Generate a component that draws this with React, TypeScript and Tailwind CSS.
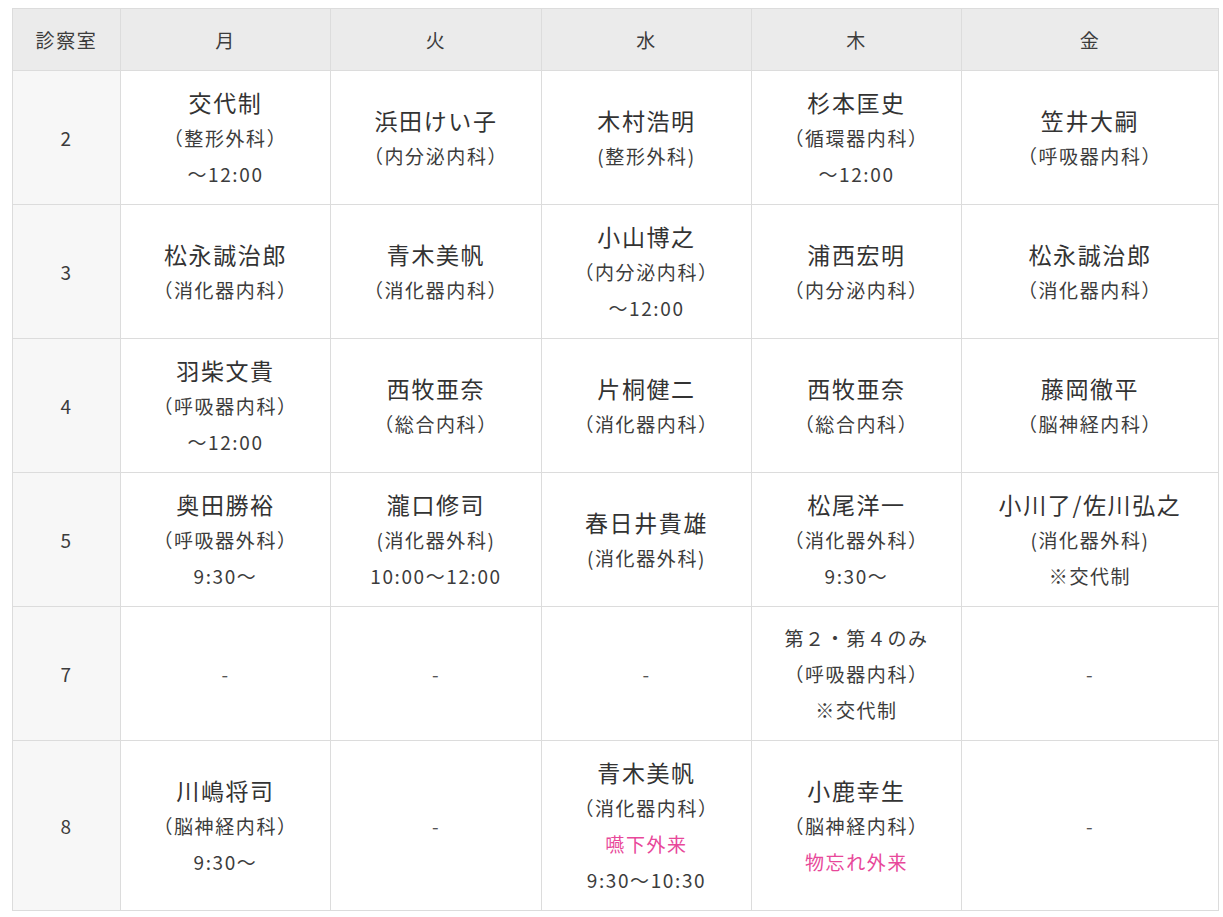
type Line = { t: string; k?: 'name' | 'sub' | 'pink' }
type Cell = Line[] | null

const days = ['月', '火', '水', '木', '金']
const widths = ['w-[210px]', 'w-[211px]', 'w-[210px]', 'w-[210px]', 'w-[257px]']

const n = (t: string): Line => ({ t, k: 'name' })
const s = (t: string): Line => ({ t, k: 'sub' })
const p = (t: string): Line => ({ t, k: 'pink' })

const rows: { room: string; cells: Cell[] }[] = [
  {
    room: '2',
    cells: [
      [n('交代制'), s('（整形外科）'), s('〜12:00')],
      [n('浜田けい子'), s('（内分泌内科）')],
      [n('木村浩明'), s('(整形外科)')],
      [n('杉本匡史'), s('（循環器内科）'), s('〜12:00')],
      [n('笠井大嗣'), s('（呼吸器内科）')],
    ],
  },
  {
    room: '3',
    cells: [
      [n('松永誠治郎'), s('（消化器内科）')],
      [n('青木美帆'), s('（消化器内科）')],
      [n('小山博之'), s('（内分泌内科）'), s('〜12:00')],
      [n('浦西宏明'), s('（内分泌内科）')],
      [n('松永誠治郎'), s('（消化器内科）')],
    ],
  },
  {
    room: '4',
    cells: [
      [n('羽柴文貴'), s('（呼吸器内科）'), s('〜12:00')],
      [n('西牧亜奈'), s('（総合内科）')],
      [n('片桐健二'), s('（消化器内科）')],
      [n('西牧亜奈'), s('（総合内科）')],
      [n('藤岡徹平'), s('（脳神経内科）')],
    ],
  },
  {
    room: '5',
    cells: [
      [n('奥田勝裕'), s('（呼吸器外科）'), s('9:30〜')],
      [n('瀧口修司'), s('(消化器外科)'), s('10:00〜12:00')],
      [n('春日井貴雄'), s('(消化器外科)')],
      [n('松尾洋一'), s('（消化器外科）'), s('9:30〜')],
      [n('小川了/佐川弘之'), s('(消化器外科)'), s('※交代制')],
    ],
  },
  {
    room: '7',
    cells: [null, null, null, [s('第２・第４のみ'), s('（呼吸器内科）'), s('※交代制')], null],
  },
  {
    room: '8',
    cells: [
      [n('川嶋将司'), s('（脳神経内科）'), s('9:30〜')],
      null,
      [n('青木美帆'), s('（消化器内科）'), p('嚥下外来'), s('9:30〜10:30')],
      [n('小鹿幸生'), s('（脳神経内科）'), p('物忘れ外来')],
      null,
    ],
  },
]

function CellBody({ cell }: { cell: Cell }) {
  if (!cell) return <span className="text-[19px] leading-[36px] text-[#555]">-</span>
  return (
    <div className="flex flex-col items-center">
      {cell.map((l, i) => (
        <span
          key={i}
          className={
            l.k === 'name'
              ? 'text-[23px] leading-[36px] text-[#333]'
              : l.k === 'pink'
                ? 'text-[19px] leading-[36px] text-[#e8489a]'
                : 'text-[19px] leading-[36px] text-[#3c3c3c]'
          }
        >
          {l.t}
        </span>
      ))}
    </div>
  )
}

export default function App() {
  return (
    <div className="min-h-[917px] bg-white pl-[12px] pt-[8px] font-['Noto_Sans_CJK_JP','Noto_Sans',sans-serif] tracking-[0.1em]">
      <table className="w-[1207px] table-fixed border-collapse border border-[#dcdcdc]">
        <thead>
          <tr className="bg-[#ebebeb]">
            <th className="w-[108px] border border-[#dcdcdc] py-[12.5px] text-center text-[19px] leading-[36px] font-normal text-[#3c3c3c]">
              診察室
            </th>
            {days.map((d, i) => (
              <th
                key={d}
                className={`${widths[i]} border border-[#dcdcdc] py-[12.5px] text-center text-[19px] leading-[36px] font-normal text-[#3c3c3c]`}
              >
                {d}
              </th>
            ))}
          </tr>
        </thead>
        <tbody>
          {rows.map(r => (
            <tr key={r.room}>
              <td className="border border-[#dcdcdc] bg-[#f7f7f7] py-[12.5px] text-center align-middle text-[19px] leading-[36px] text-[#3c3c3c]">
                {r.room}
              </td>
              {r.cells.map((c, i) => (
                <td
                  key={i}
                  className="border border-[#dcdcdc] bg-white py-[12.5px] text-center align-middle"
                >
                  <CellBody cell={c} />
                </td>
              ))}
            </tr>
          ))}
        </tbody>
      </table>
    </div>
  )
}
